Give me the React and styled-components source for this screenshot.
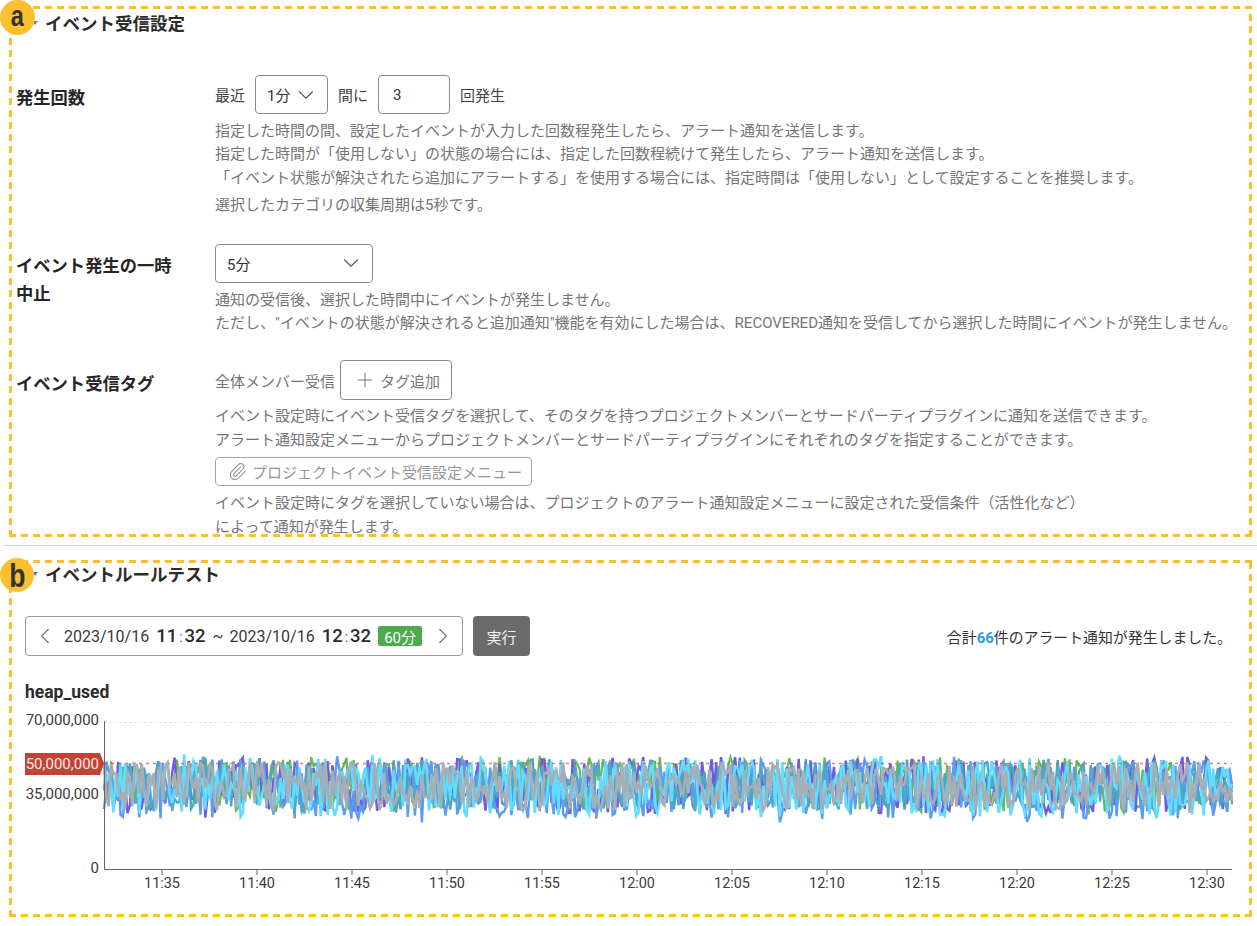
import React, { useMemo } from "react";
import styled, { createGlobalStyle } from "styled-components";
import { ChevronDown, ChevronLeft, ChevronRight, Plus, Paperclip } from "lucide-react";

const Global = createGlobalStyle`
  html, body { margin: 0; padding: 0; background: #fff; }
  body { font-family: Roboto, "Noto Sans CJK JP", sans-serif; color: #333; }
`;

const Page = styled.div`
  position: relative;
  width: 1257px;
  height: 926px;
  overflow: hidden;
  background: #fff;
`;

const SectionA = styled.section`
  height: 545px;
  padding: 13px 0 0 16px;
  box-sizing: border-box;
`;

const SectionB = styled.section`
  border-top: 1px solid #d4d4d4;
  margin-left: 4px;
  padding: 18px 0 0 21px;
`;

const Heading = styled.h2`
  display: flex;
  align-items: center;
  height: 22px;
  margin: 0 0 0 ${(p) => p.$left}px;
  font-size: 17.5px;
  line-height: 22px;
  font-weight: 700;
  color: #2b2b2b;
`;

const Row = styled.div`
  display: grid;
  grid-template-columns: 199px 1fr;
  margin-top: ${(p) => p.$top}px;
`;

const Label = styled.div`
  font-size: 17.3px;
  line-height: 28px;
  font-weight: 700;
  color: #262626;
  padding-top: ${(p) => p.$pad || 0}px;
  width: 165px;
`;

const Controls = styled.div`
  display: flex;
  align-items: center;
  font-size: 15px;
  color: ${(p) => (p.$muted ? "#777" : "#444")};
`;

const Box = styled.div`
  display: flex;
  align-items: center;
  justify-content: space-between;
  box-sizing: border-box;
  width: ${(p) => p.$w}px;
  height: 39px;
  margin: ${(p) => p.$m || "0"};
  padding: ${(p) => p.$pad || "0 8px 0 11px"};
  border: 1px solid #8c8c8c;
  border-radius: 4px;
  font-size: 15px;
  color: #333;
  background: #fff;
`;

const OutlineButton = styled.div`
  display: flex;
  align-items: center;
  gap: 3px;
  box-sizing: border-box;
  height: 40px;
  width: 112px;
  margin-left: 5px;
  padding-left: 12px;
  border: 1px solid #8c8c8c;
  border-radius: 4px;
  color: #777;
  font-size: 15px;
`;

const Help = styled.div`
  margin-top: ${(p) => p.$top || 0}px;
  font-size: 15px;
  line-height: ${(p) => p.$lh || 23.4}px;
  color: #757575;
  white-space: nowrap;
`;

const LinkButton = styled.div`
  display: flex;
  align-items: center;
  gap: 5px;
  box-sizing: border-box;
  width: 317px;
  height: 29px;
  margin: 5px 0 5px;
  padding-left: 12px;
  border: 1px solid #a5a5a5;
  border-radius: 4px;
  color: #969696;
  font-size: 15px;
`;

const Toolbar = styled.div`
  display: flex;
  align-items: center;
  margin-top: 30px;
  padding-right: 25px;
`;

const DateBar = styled.div`
  display: flex;
  align-items: center;
  box-sizing: border-box;
  width: 438px;
  height: 40px;
  padding: 0 6px 0 6px;
  border: 1px solid #9a9a9a;
  border-radius: 4px;
  color: #3a3a3a;
  font-size: 16px;
  white-space: nowrap;
`;

const DateText = styled.span`
  margin-left: ${(p) => p.$left || 0}px;
`;

const Clock = styled.b`
  font-size: 18.5px;
  font-weight: 500;
  color: #2b2b2b;
  margin-left: 7px;
  & i { font-style: normal; font-weight: 400; font-size: 14px; margin: 0 2px; color: #555; }
`;

const Tilde = styled.span`
  margin: 0 6px 0 7px;
`;

const Badge = styled.span`
  display: inline-flex;
  align-items: center;
  justify-content: center;
  width: 44px;
  height: 20px;
  margin-left: 7px;
  border-radius: 2px;
  background: #4caa4f;
  color: #fff;
  font-size: 15px;
`;

const NextIcon = styled(ChevronRight)`
  margin-left: auto;
`;

const RunButton = styled.div`
  display: flex;
  align-items: center;
  justify-content: center;
  width: 57px;
  height: 40px;
  margin-left: 10px;
  border-radius: 4px;
  background: #6b6b6b;
  color: #f2f2f2;
  font-size: 15px;
`;

const Total = styled.div`
  margin-left: auto;
  font-size: 14.9px;
  color: #333;
  white-space: nowrap;
  & b { color: #1f9bf5; font-weight: 700; }
`;

const MetricName = styled.div`
  margin-top: 26px;
  font-size: 17.5px;
  line-height: 20px;
  font-weight: 700;
  color: #2b2b2b;
`;

const ChartSvg = styled.svg`
  display: block;
  width: 1210px;
  height: 190px;
  margin-top: 8px;
  font-family: Roboto, sans-serif;
`;

const Dashed = styled.div`
  position: absolute;
  left: 9px;
  top: ${(p) => p.$top}px;
  width: 1243px;
  height: ${(p) => p.$h}px;
  box-sizing: border-box;
  pointer-events: none;
  background-image:
    repeating-linear-gradient(90deg, #fcbf26 0 7px, transparent 7px 12px),
    repeating-linear-gradient(90deg, #fcbf26 0 7px, transparent 7px 12px),
    repeating-linear-gradient(0deg, #fcbf26 0 7px, transparent 7px 12px),
    repeating-linear-gradient(0deg, #fcbf26 0 7px, transparent 7px 12px);
  background-size: 100% 3px, 100% 3px, 3px 100%, 3px 100%;
  background-position: 0 0, 0 100%, 0 0, 100% 0;
  background-repeat: no-repeat;
`;

const Marker = styled.div`
  position: absolute;
  left: 0;
  top: ${(p) => p.$top}px;
  width: ${(p) => p.$size}px;
  height: ${(p) => p.$size}px;
  display: flex;
  align-items: center;
  justify-content: center;
  border-radius: 50%;
  background: #fcc02e;
  color: #333;
  font-family: "Liberation Sans", sans-serif;
  font-weight: 700;
  font-size: ${(p) => p.$font}px;
  line-height: 1;
  padding-bottom: ${(p) => p.$pb || 0}px;
  box-sizing: border-box;
`;

const Glyph = styled.span`
  display: block;
  transform: scaleX(0.78);
`;

const Tri = styled.div`
  position: absolute;
  left: 32px;
  top: ${(p) => p.$top}px;
  width: 0;
  height: 0;
  border-left: 3px solid transparent;
  border-right: 3px solid transparent;
  border-top: 4px solid #4a7ff0;
`;

function mulberry(a) {
  return () => {
    a |= 0; a = (a + 0x6d2b79f5) | 0;
    let t = Math.imul(a ^ (a >>> 15), 1 | a);
    t = (t + Math.imul(t ^ (t >>> 7), 61 | t)) ^ t;
    return ((t ^ (t >>> 14)) >>> 0) / 4294967296;
  };
}

const SERIES = [
  { c: "#62bb5c", seed: 11, top: 47, bot: 102, w: 2.2 },
  { c: "#6d5ae6", seed: 23, top: 47, bot: 104, w: 2.4 },
  { c: "#5b9df2", seed: 37, top: 50, bot: 109, w: 2.4 },
  { c: "#4ba8c2", seed: 67, top: 49, bot: 100, w: 2.4 },
  { c: "#62dcff", seed: 51, top: 48, bot: 107, w: 2.6 },
  { c: "#a9adb4", seed: 79, top: 52, bot: 100, w: 2.6 },
];

const X0 = 79;
const X1 = 1207;

function seriesPath({ seed, top, bot }) {
  const r = mulberry(seed);
  const n = 480;
  const mid = (top + bot) / 2;
  const amp = (bot - top) / 2;
  const pts = [];
  for (let i = 0; i < n; i++) {
    let v = r() * 2 - 1;
    if (r() < 0.06) v *= 1.14;
    const y = mid + v * amp;
    const x = X0 + ((X1 - X0) * i) / (n - 1);
    pts.push(`${x.toFixed(1)},${y.toFixed(1)}`);
  }
  return pts.join(" ");
}

const TIMES = ["11:35","11:40","11:45","11:50","11:55","12:00","12:05","12:10","12:15","12:20","12:25","12:30"];

function Chart() {
  const paths = useMemo(() => SERIES.map((s) => ({ ...s, pts: seriesPath(s) })), []);
  const under = paths.slice(0, -1);
  const gray = paths[paths.length - 1];
  return (
    <ChartSvg viewBox="0 0 1210 190">
      <line x1={X0} x2={X1} y1="12.5" y2="12.5" stroke="#e4e4e4" strokeDasharray="3 2" />
      {under.map((s) => (
        <polyline key={s.seed} points={s.pts} fill="none" stroke={s.c} strokeWidth={s.w} />
      ))}
      <line x1={X0} x2={X1} y1="53.5" y2="53.5" stroke="#d9534f" strokeOpacity="0.75" strokeWidth="1.5" strokeDasharray="3 4" />
      <polyline points={gray.pts} fill="none" stroke={gray.c} strokeWidth={gray.w} />
      <path d="M79.5 11V159.5H1207" fill="none" stroke="#666" />
      {TIMES.map((t, i) => {
        const x = 137 + i * 95;
        return (
          <g key={t}>
            <line x1={x} x2={x} y1="159" y2="165" stroke="#666" />
            <text x={x} y="178" textAnchor="middle" fontSize="14.4" fill="#3a3a3a">{t}</text>
          </g>
        );
      })}
      <text x="74" y="15" textAnchor="end" fontSize="15" fill="#3a3a3a">70,000,000</text>
      <polygon points="0,43 75,43 79,53.5 75,65 0,65" fill="#c44235" />
      <text x="74" y="58.5" textAnchor="end" fontSize="15" fill="#fbe9e7">50,000,000</text>
      <text x="74" y="89" textAnchor="end" fontSize="15" fill="#3a3a3a">35,000,000</text>
      <text x="74" y="163" textAnchor="end" fontSize="15" fill="#3a3a3a">0</text>
    </ChartSvg>
  );
}

export default function App() {
  return (
    <Page>
      <Global />
      <SectionA>
        <Heading $left={29}>イベント受信設定</Heading>
        <Row $top={40}>
          <Label $pad={9}>発生回数</Label>
          <div>
            <Controls>
              最近
              <Box $w={73} $m="0 10px 0 10px">1分<ChevronDown size={26} strokeWidth={1} color="#555" /></Box>
              間に
              <Box $w={72} $m="0 10px 0 10px" $pad="0 14px">3</Box>
              回発生
            </Controls>
            <Help $top={6}>指定した時間の間、設定したイベントが入力した回数程発生したら、アラート通知を送信します。</Help>
            <Help>指定した時間が「使用しない」の状態の場合には、指定した回数程続けて発生したら、アラート通知を送信します。</Help>
            <Help>「イベント状態が解決されたら追加にアラートする」を使用する場合には、指定時間は「使用しない」として設定することを推奨します。</Help>
            <Help $top={4}>選択したカテゴリの収集周期は5秒です。</Help>
          </div>
        </Row>
        <Row $top={26}>
          <Label $pad={8}>イベント発生の一時中止</Label>
          <div>
            <Box $w={158}>5分<ChevronDown size={26} strokeWidth={1} color="#555" /></Box>
            <Help $top={6}>通知の受信後、選択した時間中にイベントが発生しません。</Help>
            <Help>ただし、"イベントの状態が解決されると追加通知"機能を有効にした場合は、RECOVERED通知を受信してから選択した時間にイベントが発生しません。</Help>
          </div>
        </Row>
        <Row $top={25}>
          <Label $pad={10}>イベント受信タグ</Label>
          <div>
            <Controls $muted>
              全体メンバー受信
              <OutlineButton><Plus size={24} strokeWidth={1} color="#777" />タグ追加</OutlineButton>
            </Controls>
            <Help $top={4} $lh={24}>イベント設定時にイベント受信タグを選択して、そのタグを持つプロジェクトメンバーとサードパーティプラグインに通知を送信できます。</Help>
            <Help $lh={24}>アラート通知設定メニューからプロジェクトメンバーとサードパーティプラグインにそれぞれのタグを指定することができます。</Help>
            <LinkButton><Paperclip size={19} strokeWidth={1.3} color="#8a8a8a" />プロジェクトイベント受信設定メニュー</LinkButton>
            <Help $lh={24}>イベント設定時にタグを選択していない場合は、プロジェクトのアラート通知設定メニューに設定された受信条件（活性化など）</Help>
            <Help $lh={24}>によって通知が発生します。</Help>
          </div>
        </Row>
      </SectionA>
      <SectionB>
        <Heading $left={20}>イベントルールテスト</Heading>
        <Toolbar>
          <DateBar>
            <ChevronLeft size={26} strokeWidth={1.1} color="#777" />
            <DateText $left={6}>2023/10/16</DateText>
            <Clock>11<i>:</i>32</Clock>
            <Tilde>~</Tilde>
            <DateText>2023/10/16</DateText>
            <Clock>12<i>:</i>32</Clock>
            <Badge>60分</Badge>
            <NextIcon size={26} strokeWidth={1.1} color="#777" />
          </DateBar>
          <RunButton>実行</RunButton>
          <Total>合計<b>66</b>件のアラート通知が発生しました。</Total>
        </Toolbar>
        <MetricName>heap_used</MetricName>
        <Chart />
      </SectionB>
      <Tri $top={21} />
      <Tri $top={572} />
      <Dashed $top={6} $h={531} />
      <Dashed $top={560} $h={357} />
      <Marker $top={0} $size={35} $font={30} $pb={3}><Glyph>a</Glyph></Marker>
      <Marker $top={558} $size={34} $font={34}><Glyph>b</Glyph></Marker>
    </Page>
  );
}
